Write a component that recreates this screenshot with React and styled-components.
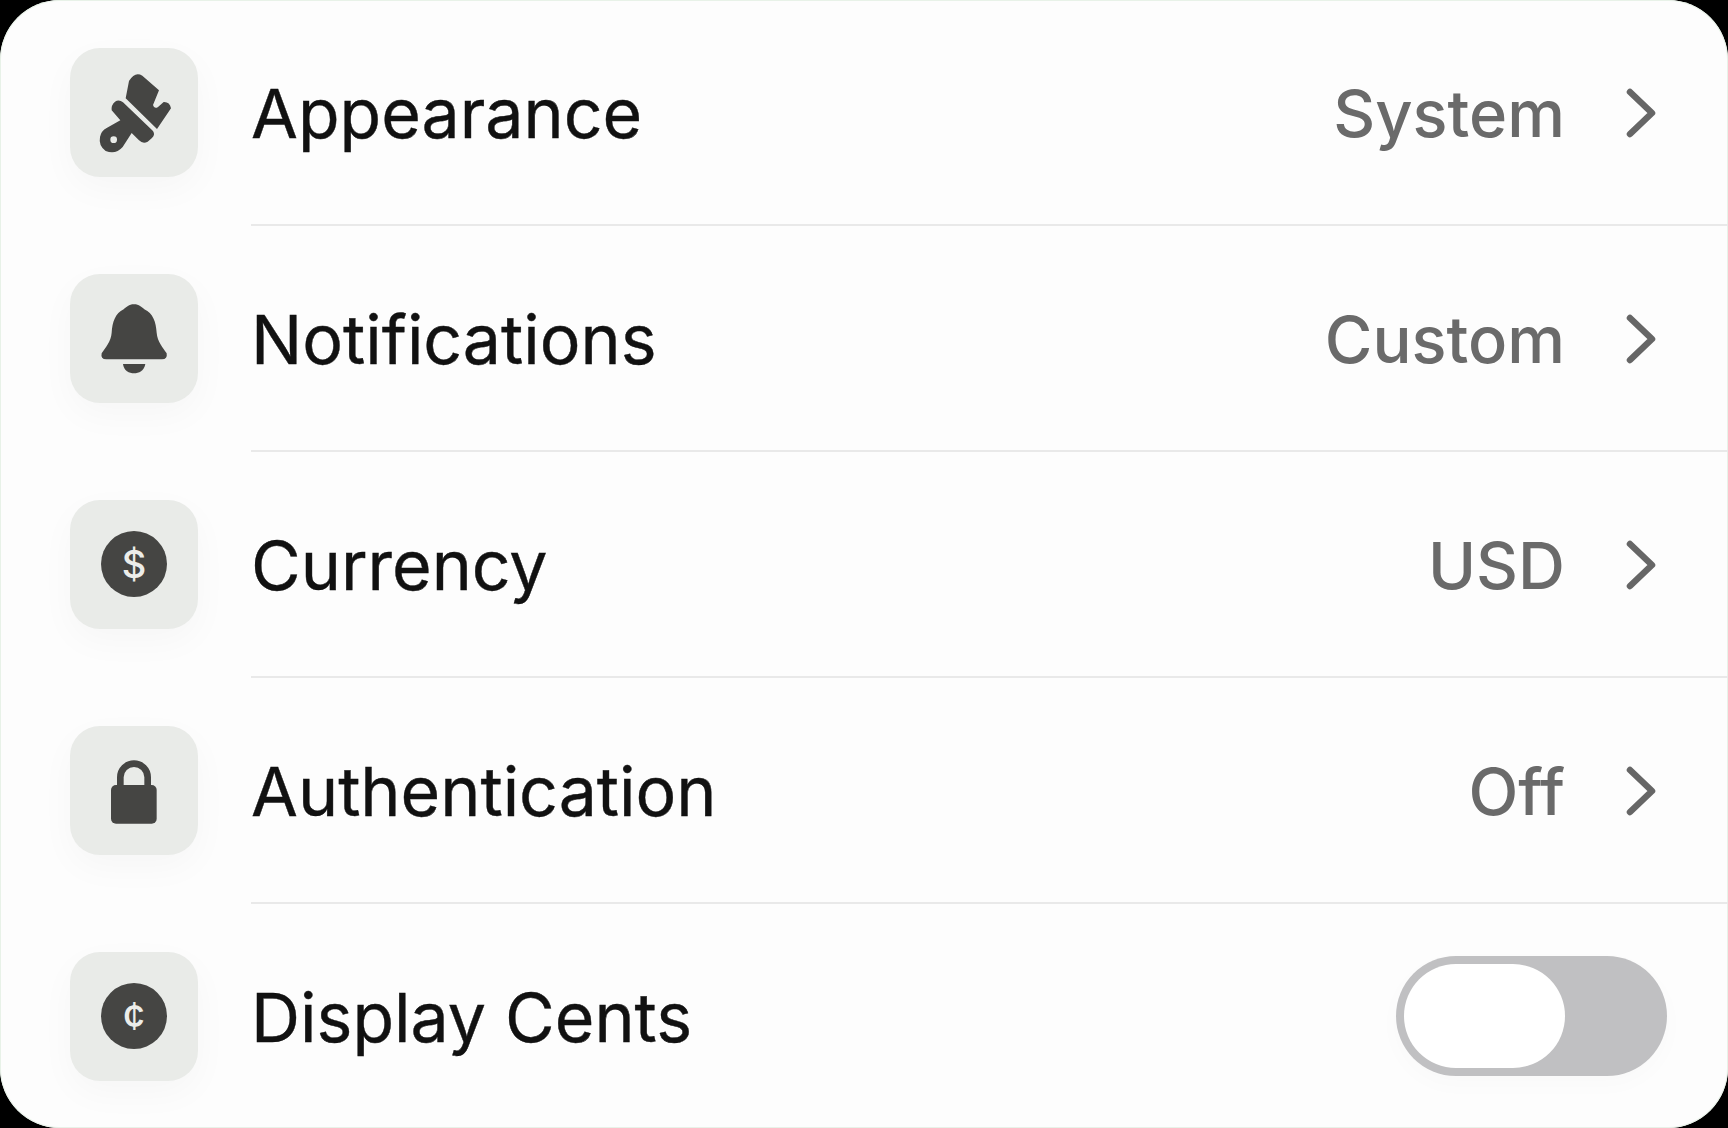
import React from "react";
import styled, { createGlobalStyle } from "styled-components";

const Global = createGlobalStyle`
  html, body { margin: 0; padding: 0; background: #000; }
  #root { width: 1728px; height: 1128px; overflow: hidden; }
`;

const Card = styled.main`
  width: 1728px;
  height: 1128px;
  box-sizing: border-box;
  display: flex;
  flex-direction: column;
  background: #fdfdfd;
  border-radius: 60px;
  box-shadow: inset 0 0 0 1px #e8f2e8;
  overflow: hidden;
  font-family: Inter, "Liberation Sans", sans-serif;
`;

const Row = styled.div`
  display: flex;
  align-items: center;
  gap: 53px;
  padding-left: 70px;
  height: ${(p) => (p.$last ? "224px" : "226px")};
  flex: none;
`;

const Tile = styled.div`
  width: 128px;
  height: 129px;
  margin-bottom: ${(p) => (p.$last ? "0" : "2px")};
  flex: none;
  display: flex;
  align-items: center;
  justify-content: center;
  background: #e9ebe8;
  border-radius: 30px;
  box-shadow: 0 12px 36px rgba(0, 0, 0, 0.03);
`;

const Glyph = styled.svg`
  width: 100px;
  height: 100px;
  fill: #454543;
`;

const Coin = styled.div`
  width: 66px;
  height: 66px;
  border-radius: 50%;
  background: #454543;
  color: #ecedea;
  display: flex;
  align-items: center;
  justify-content: center;
  font-size: 38px;
  font-weight: 500;
  line-height: 1;
`;

const Body = styled.div`
  flex: 1;
  align-self: stretch;
  display: flex;
  align-items: center;
  justify-content: space-between;
  padding-right: 61px;
  padding-top: 2px;
  border-bottom: ${(p) => (p.$last ? "0" : "2px solid #e9e9e9")};
`;

const Label = styled.span`
  font-size: 68px;
  font-weight: 400;
  color: #111;
  -webkit-text-stroke: 0.4px #111;
`;

const Trail = styled.div`
  display: flex;
  align-items: center;
  gap: 61px;
  margin-right: 11px;
`;

const Value = styled.span`
  font-size: 65px;
  font-weight: 500;
  color: #6a6a6a;
`;

const Chevron = styled.svg`
  width: 30px;
  height: 50px;
  fill: none;
  stroke: #666;
  stroke-width: 6.5;
  stroke-linecap: round;
  stroke-linejoin: round;
`;

const Toggle = styled.div`
  width: 271px;
  height: 120px;
  box-sizing: border-box;
  padding: 8px;
  margin-top: -2px;
  border-radius: 60px;
  background: #c0c0c2;
  display: flex;
  align-items: center;
  box-shadow: 0 8px 24px rgba(0, 0, 0, 0.02);
`;

const Thumb = styled.div`
  width: 161px;
  height: 104px;
  border-radius: 52px;
  background: #fff;
`;

const Brush = () => (
  <Glyph viewBox="131 95 300 300">
    <path d="M266 152 Q284 122 306 136 L356 180 L338 224 Q342 238 354 229 L370 215 Q388 214 392 234 L350 296 L256 204 Z" />
    <path
      fillRule="evenodd"
      d="M214 240 Q212 224 224 214 Q236 206 248 216 L338 302 Q346 314 334 324 L322 334 Q308 342 296 330 L274 308 L247 350 Q226 374 196 362 Q174 346 179 320 Q183 301 199 293 L240 270 Z M220 318 A10 10 0 1 0 220 338 A10 10 0 1 0 220 318 Z"
    />
  </Glyph>
);

const Bell = () => (
  <Glyph viewBox="131 84 300 300">
    <path d="M281 133 C297 133 303 141 312 148 C338 160 347 186 349 218 C351 246 368 262 379 280 Q382 298 365 298 L198 298 Q180 298 184 280 C195 262 212 246 214 218 C216 186 225 160 250 148 C259 141 265 133 281 133 Z" />
    <path d="M248 312 L315 312 C312 332 295 340 281 340 C267 340 250 332 248 312 Z" />
  </Glyph>
);

const Lock = () => (
  <Glyph viewBox="131 87 300 300">
    <path d="M240 228 V199 A41 41 0 0 1 322 199 V228" fill="none" stroke="#454543" strokeWidth="20" />
    <rect x="212" y="222" width="137" height="116" rx="15" />
  </Glyph>
);

const Arrow = () => (
  <Chevron viewBox="0 0 30 50">
    <path d="M4 4 L26 25 L4 46" />
  </Chevron>
);

const rows = [
  { label: "Appearance", value: "System", icon: <Brush /> },
  { label: "Notifications", value: "Custom", icon: <Bell /> },
  { label: "Currency", value: "USD", icon: <Coin>$</Coin> },
  { label: "Authentication", value: "Off", icon: <Lock /> },
];

export default function App() {
  return (
    <>
      <Global />
      <Card>
        {rows.map((r) => (
          <Row key={r.label}>
            <Tile>{r.icon}</Tile>
            <Body>
              <Label>{r.label}</Label>
              <Trail>
                <Value>{r.value}</Value>
                <Arrow />
              </Trail>
            </Body>
          </Row>
        ))}
        <Row $last>
          <Tile $last>
            <Coin>¢</Coin>
          </Tile>
          <Body $last>
            <Label>Display Cents</Label>
            <Toggle>
              <Thumb />
            </Toggle>
          </Body>
        </Row>
      </Card>
    </>
  );
}
